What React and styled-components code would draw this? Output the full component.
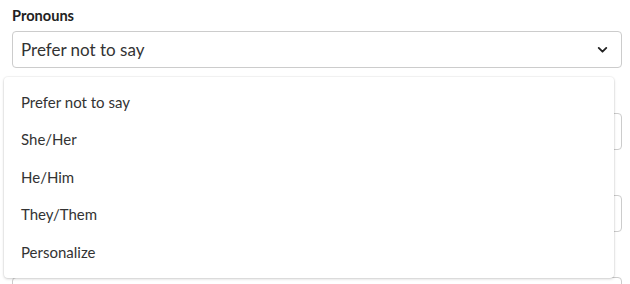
import React from "react";
import styled, { createGlobalStyle } from "styled-components";

const GlobalStyle = createGlobalStyle`
  body {
    margin: 0;
    background: #ffffff;
    font-family: "Lato", "Open Sans", sans-serif;
    color: #333333;
  }
`;

const Page = styled.div`
  padding: 8px 8px 0 12px;
  height: 276px;
  overflow: hidden;
`;

const Field = styled.div`
  position: relative;
  margin-bottom: 22px;
`;

const Label = styled.div`
  height: 16px;
  font-size: 14.6px;
  font-weight: 700;
  line-height: 16px;
  color: #222222;
  margin-bottom: 7px;
`;

const SelectBox = styled.div`
  height: 37px;
  box-sizing: border-box;
  border: 1px solid #cccccc;
  border-radius: 4px;
  display: flex;
  align-items: center;
  justify-content: space-between;
  padding: 0 12px 0 8px;
  font-size: 17px;
  color: #333333;
`;

const Menu = styled.ul`
  position: absolute;
  top: 69px;
  left: -8px;
  width: 610px;
  margin: 0;
  padding: 6px 0 7.5px;
  list-style: none;
  background: #ffffff;
  border-radius: 4px;
  box-shadow: 0 1px 3px rgba(0, 0, 0, 0.18), 0 0 0 1px rgba(0, 0, 0, 0.03);
  z-index: 2;
`;

const Item = styled.li`
  height: 37.5px;
  display: flex;
  align-items: center;
  padding-left: 17px;
  font-size: 15px;
  color: #333333;
`;

const Chevron = () => (
  <svg width="13" height="13" viewBox="0 0 24 24" fill="none" stroke="#222" strokeWidth="3.4" strokeLinecap="round" strokeLinejoin="round">
    <polyline points="5 9 12 16 19 9" />
  </svg>
);

const options = ["Prefer not to say", "She/Her", "He/Him", "They/Them", "Personalize"];

// the fields below sit under the open menu; only their boxes peek out
const hiddenFields = [1, 2, 3];

const App = () => (
  <>
    <GlobalStyle />
    <Page>
      <Field>
        <Label>Pronouns</Label>
        <SelectBox>
          <span>Prefer not to say</span>
          <Chevron />
        </SelectBox>
        <Menu>
          {options.map((o) => (
            <Item key={o}>{o}</Item>
          ))}
        </Menu>
      </Field>
      {hiddenFields.map((n) => (
        <Field key={n}>
          <Label />
          <SelectBox />
        </Field>
      ))}
    </Page>
  </>
);

export default App;
